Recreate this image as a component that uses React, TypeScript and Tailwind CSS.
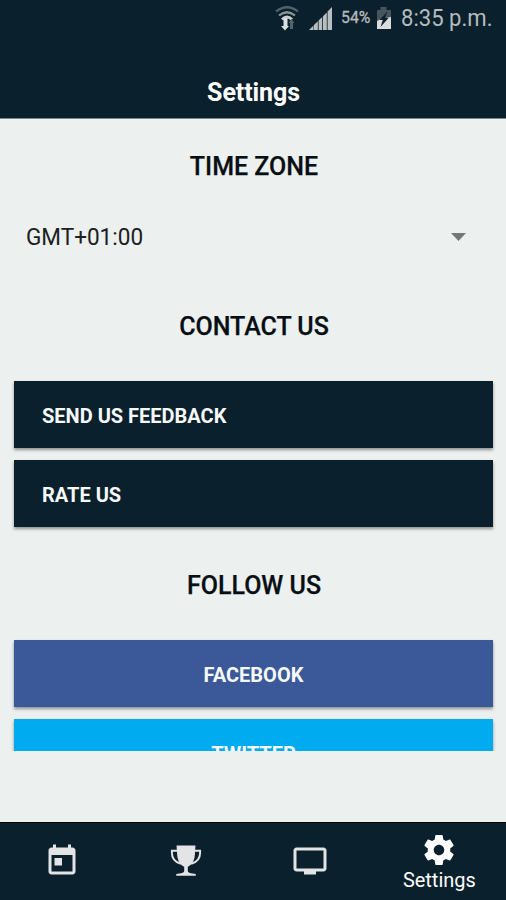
import type { ReactNode } from "react";

interface ActionButtonProps {
  label: string;
  className: string;
}

const TABS: { name: string; icon: ReactNode; active?: boolean }[] = [
  {
    name: "Calendar",
    icon: (
      <path d="M19 3h-1V1h-2v2H8V1H6v2H5c-1.110 0-1.990.9-1.990 2L3 19c0 1.100.89 2 2 2h14c1.100 0 2-.9 2-2V5c0-1.100-.9-2-2-2zm0 16H5V8h14v11zM7 10h5v5H7z" />
    ),
  },
  {
    name: "Trophy",
    icon: (
      <>
        <path d="M5.700 1.700h12.600L17.900 8c-.4 4-2.100 6.700-4.700 7.900v2.900c.3.900 1.500 1.400 3.200 1.600l2.100.2v1.200h-13v-1.200l2.100-.2c1.700-.2 2.900-.7 3.200-1.600v-2.900C8.200 14.700 6.500 12 6.100 8z" />
        <path
          d="M6 5.100H2.600v1.500c0 3.600 2.100 6.100 5.900 7.200M18 5.100h3.400v1.500c0 3.600-2.100 6.100-5.900 7.200"
          fill="none"
          stroke="currentColor"
          strokeWidth="1.300"
        />
      </>
    ),
  },
  {
    name: "Live",
    icon: (
      <path d="M21 3H3c-1.100 0-2 .9-2 2v12c0 1.100.9 2 2 2h5v2h8v-2h5c1.100 0 1.990-.9 1.990-2L23 5c0-1.100-.9-2-2-2zm0 14H3V5h18v12z" />
    ),
  },
  {
    name: "Settings",
    active: true,
    icon: (
      <path d="M19.430 12.980c.04-.32.07-.64.07-.98s-.03-.66-.07-.98l2.110-1.650c.19-.15.24-.42.12-.64l-2-3.460c-.12-.22-.39-.3-.61-.22l-2.490 1c-.52-.4-1.080-.73-1.690-.98l-.38-2.650C14.460 2.180 14.250 2 14 2h-4c-.25 0-.46.18-.49.42l-.38 2.650c-.61.25-1.170.59-1.690.98l-2.490-1c-.23-.09-.49 0-.61.22l-2 3.460c-.13.22-.07.49.12.64l2.110 1.650c-.04.32-.07.65-.07.98s.03.66.07.98l-2.110 1.650c-.19.15-.24.42-.12.64l2 3.460c.12.22.39.3.61.22l2.490-1c.52.4 1.080.73 1.690.98l.38 2.650c.03.24.24.42.49.42h4c.25 0 .46-.18.49-.42l.38-2.650c.61-.25 1.170-.59 1.690-.98l2.490 1c.23.09.49 0 .61-.22l2-3.460c.12-.22.07-.49-.12-.64l-2.110-1.650zM12 15.500c-1.930 0-3.500-1.570-3.500-3.500s1.570-3.500 3.500-3.500 3.500 1.570 3.500 3.500-1.570 3.500-3.500 3.500z" />
    ),
  },
];

function StatusBar() {
  return (
    <div className="flex h-9 items-center pl-[275px] text-[#b5bbbf]">
      <svg width="25" height="28" viewBox="0 0 25 28" className="shrink-0" fill="none">
        <path d="M1 7.500Q12 -1 23 7.500" stroke="#52616a" strokeWidth="2.200" />
        <path d="M4 11.500Q12 5 20 11.500" stroke="#8b959a" strokeWidth="2.200" />
        <path d="M7 15.500Q12 10.500 17 15.500" stroke="#c8cccf" strokeWidth="2.800" />
        <path d="M8.500 14h4v8h1.500L10 26.500 6 22h2.500z" fill="#dcdedf" />
        <path d="M16.500 15l3 4h-1.500v6h-3v-6h-1.500z" fill="#53636b" />
      </svg>
      <svg width="24" height="25" viewBox="0 0 24 25" className="ml-[9px] shrink-0" fill="#b9bec1">
        <path d="M0 24l4.500-4.500V24z" />
        <path d="M5 24v-5l3.800-3.800V24z" />
        <path d="M9.600 24v-9.500l3.600-3.600V24z" />
        <path d="M14 24V10.200l3.800-3.800V24z" />
        <path d="M18.600 24V5.600L23 1v23z" />
      </svg>
      <span className="ml-[8px] w-[32px] text-[17px] whitespace-nowrap">
        <span className="inline-block origin-left scale-x-[0.93] [-webkit-text-stroke:0.3px_#b5bbbf]">
          54%
        </span>
      </span>
      <svg width="16" height="23" viewBox="0 0 16 23" className="ml-[3px] shrink-0">
        <path d="M4.500 0h6v3H15v19H1V3h3.500z" fill="#46555d" />
        <path d="M1 14l4-2 10-2v12H1z" fill="#d9dbdc" />
        <path d="M11.500 4.500L3.500 13h3.300L4.500 20l8-9H9z" fill="#0a202c" />
      </svg>
      <span className="ml-[9px] text-[24px] whitespace-nowrap">
        <span className="inline-block origin-left scale-x-[0.92]">8:35 p.m.</span>
      </span>
    </div>
  );
}

function SectionTitle({ children }: { children: ReactNode }) {
  return (
    <h2 className="pl-px text-center text-[25px] leading-[30px] font-medium text-[#080f14] [-webkit-text-stroke:0.25px_#080f14]">
      {children}
    </h2>
  );
}

function ActionButton({ label, className }: ActionButtonProps) {
  return (
    <button
      className={`flex h-[67px] w-full shrink-0 items-center pt-0.5 text-[20px] font-bold text-[#f7f8f8] shadow-[0_2px_3px_rgba(0,0,0,0.4)] ${className}`}
    >
      {label}
    </button>
  );
}

export default function App() {
  return (
    <div className="flex h-[900px] w-full flex-col overflow-hidden bg-[#ecf0ef] font-['Roboto',sans-serif]">
      <header className="h-[119px] shrink-0 border-b border-[#7d878a] bg-[#0a202c]">
        <StatusBar />
        <h1 className="mt-[41px] pl-px text-center text-[25px] leading-8 font-bold tracking-[-0.1px] text-white">
          Settings
        </h1>
      </header>

      <main className="flex h-[632px] shrink-0 flex-col overflow-hidden pr-[13px] pl-[14px] pt-[33px]">
        <SectionTitle>TIME ZONE</SectionTitle>
        <div className="mt-[41px] flex h-[30px] shrink-0 items-center justify-between pr-[27px] pl-3 text-[23px] text-[#1b2022]">
          <span className="origin-left scale-x-[0.98]">GMT+01:00</span>
          <svg width="15" height="8" viewBox="0 0 15 8" className="mb-0.5">
            <path d="M0 0h15L7.500 8z" fill="#737776" />
          </svg>
        </div>
        <div className="mt-[59px]">
          <SectionTitle>CONTACT US</SectionTitle>
        </div>
        <div className="mt-[39px] flex flex-col gap-3">
          <ActionButton label="SEND US FEEDBACK" className="bg-[#0a202c] pl-7" />
          <ActionButton label="RATE US" className="bg-[#0a202c] pl-7" />
        </div>
        <div className="mt-11">
          <SectionTitle>FOLLOW US</SectionTitle>
        </div>
        <div className="mt-[39px] flex flex-col gap-3">
          <ActionButton label="FACEBOOK" className="justify-center bg-[#3b5998]" />
          <ActionButton label="TWITTER" className="justify-center bg-[#00abef]" />
        </div>
      </main>

      <nav className="mt-auto grid h-[78px] shrink-0 grid-cols-[124px_124px_124px_1fr] border-t border-black bg-[#0a202c]">
        {TABS.map((tab) => (
          <div
            key={tab.name}
            className={`flex flex-col items-center ${
              tab.active ? "pt-[9px] text-white" : "pt-5 text-[#e2e4e5]"
            }`}
          >
            <svg width="36" height="36" viewBox="0 0 24 24" fill="currentColor">
              {tab.icon}
            </svg>
            {tab.active && (
              <span className="origin-center scale-x-[0.95] text-[21px] leading-6">{tab.name}</span>
            )}
          </div>
        ))}
      </nav>
    </div>
  );
}
